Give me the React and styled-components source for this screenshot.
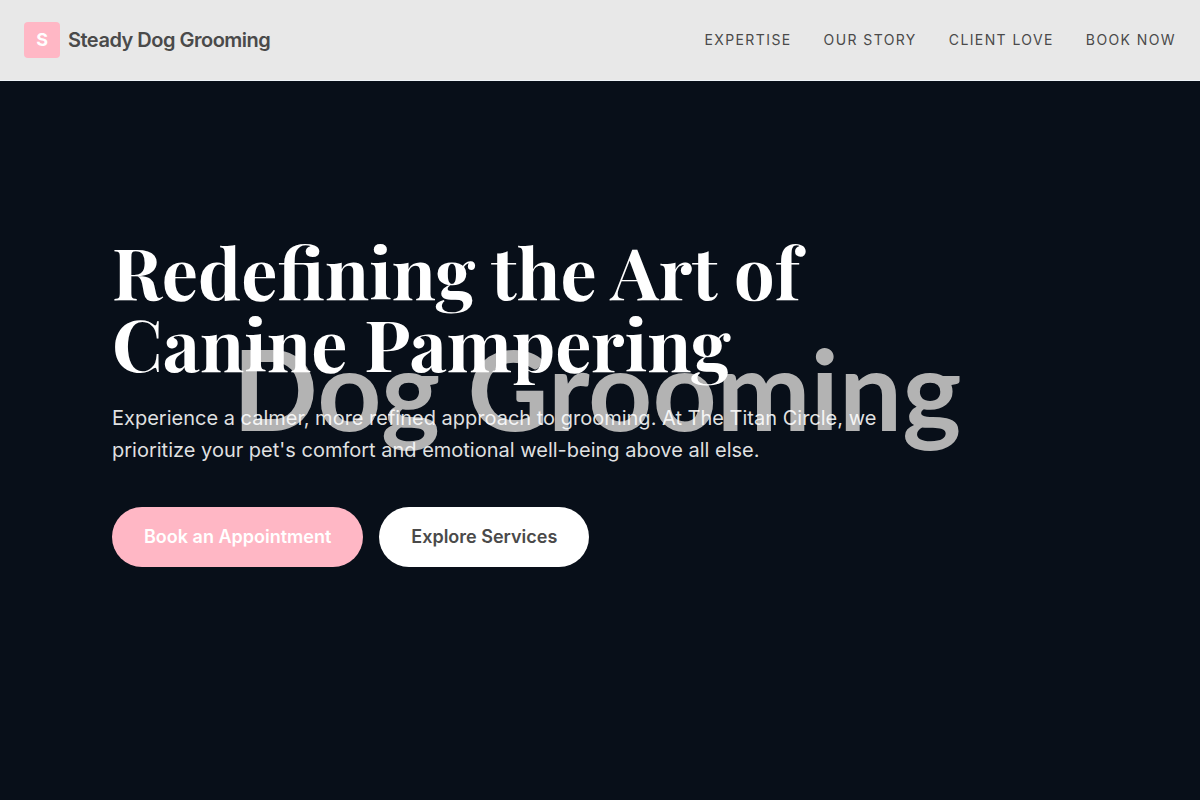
import React from "react";
import styled, { createGlobalStyle } from "styled-components";

const GlobalStyle = createGlobalStyle`
  *, *::before, *::after { box-sizing: border-box; }
  body {
    margin: 0;
    background: #080f19;
    color: #4a4a4a;
    font-family: Inter, "Liberation Sans", sans-serif;
  }
`;

const Header = styled.header`
  position: fixed;
  inset: 0 0 auto;
  z-index: 10;
  display: flex;
  align-items: center;
  justify-content: space-between;
  padding: 22px 24px;
  background: #e8e8e8;
  border-bottom: 1px solid #eef3f8;
`;

const Brand = styled.a`
  display: flex;
  align-items: center;
  gap: 8px;
  color: inherit;
  font-size: 20px;
  font-weight: 600;
  line-height: 28px;
  letter-spacing: -0.025em;
  text-decoration: none;
`;

const BrandMark = styled.span`
  display: grid;
  place-items: center;
  width: 36px;
  height: 36px;
  border-radius: 4px;
  background: #ffb7c5;
  color: #fff;
  font-size: 18px;
  font-weight: 700;
`;

const Nav = styled.nav`
  display: flex;
  gap: 32px;
`;

const NavLink = styled.a`
  color: inherit;
  font-size: 14px;
  line-height: 20px;
  letter-spacing: 0.1em;
  text-transform: uppercase;
  text-decoration: none;
`;

const Hero = styled.section`
  position: relative;
  display: flex;
  align-items: center;
  min-height: 100vh;
`;

const Backdrop = styled.div`
  position: absolute;
  inset: 0;
  display: grid;
  place-items: center;
  padding: 0 6px 24px 0;
  overflow: hidden;
  color: #b3b3b3;
  font-family: Lato, sans-serif;
  font-size: 112px;
  font-weight: 700;
  line-height: 1;
  white-space: nowrap;
`;

const Content = styled.div`
  position: relative;
  width: 100%;
  max-width: 1024px;
  margin: 0 auto;
  padding: 0 24px;
`;

const Title = styled.h1`
  max-width: 800px;
  margin: 0 0 24px;
  color: #fff;
  font-family: "Playfair Display", "Liberation Serif", serif;
  font-size: 72px;
  font-weight: 700;
  line-height: 72px;
`;

const Lead = styled.p`
  max-width: 800px;
  margin: 0 0 41px;
  color: rgba(255, 255, 255, 0.88);
  font-size: 20px;
  line-height: 32px;
`;

const Actions = styled.div`
  display: flex;
  flex-wrap: wrap;
  gap: 16px;
`;

const Button = styled.button`
  padding: 16px 32px;
  border: 0;
  border-radius: 30px;
  background: ${(p) => (p.$primary ? "#ffb7c5" : "#fff")};
  color: ${(p) => (p.$primary ? "#fff" : "#4a4a4a")};
  font-family: inherit;
  font-size: 18px;
  font-weight: 600;
  line-height: 28px;
  cursor: pointer;
`;

const links = [
  ["Expertise", "#expertise"],
  ["Our Story", "#story"],
  ["Client Love", "#clients"],
  ["Book Now", "#book"],
];

export default function App() {
  return (
    <>
      <GlobalStyle />
      <Header>
        <Brand href="#top">
          <BrandMark>S</BrandMark>
          Steady Dog Grooming
        </Brand>
        <Nav aria-label="Main">
          {links.map(([label, href]) => (
            <NavLink key={href} href={href}>{label}</NavLink>
          ))}
        </Nav>
      </Header>
      <main id="top">
        <Hero>
          <Backdrop>Dog Grooming</Backdrop>
          <Content>
            <Title>Redefining the Art of Canine Pampering</Title>
            <Lead>
              Experience a calmer, more refined approach to grooming. At The Titan Circle, we
              prioritize your pet's comfort and emotional well-being above all else.
            </Lead>
            <Actions>
              <Button type="button" $primary>Book an Appointment</Button>
              <Button type="button">Explore Services</Button>
            </Actions>
          </Content>
        </Hero>
      </main>
    </>
  );
}
